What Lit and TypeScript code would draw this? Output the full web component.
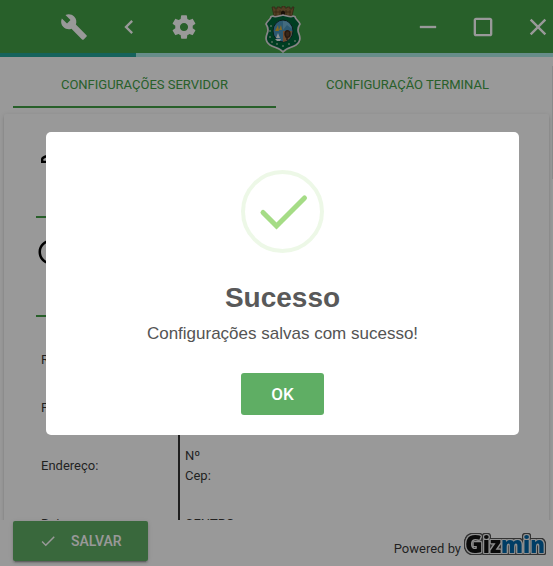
import { LitElement, html, css, svg } from "lit";
import { customElement } from "lit/decorators.js";

const paths = {
  build: "M22.7 19l-9.1-9.1c.9-2.3.4-5-1.5-6.9-2-2-5-2.4-7.4-1.3L9 6 6 9 1.6 4.7C.4 7.1.9 10.1 2.9 12.1c1.9 1.9 4.6 2.4 6.9 1.5l9.1 9.1c.4.4 1 .4 1.4 0l2.3-2.3c.5-.4.5-1.1.1-1.4z",
  back: "M15.41 7.41L14 6l-6 6 6 6 1.41-1.41L10.83 12z",
  gear: "M19.43 12.98c.04-.32.07-.64.07-.98s-.03-.66-.07-.98l2.11-1.65c.19-.15.24-.42.12-.64l-2-3.46c-.12-.22-.39-.3-.61-.22l-2.49 1c-.52-.4-1.08-.73-1.69-.98l-.38-2.65C14.46 2.18 14.25 2 14 2h-4c-.25 0-.46.18-.49.42l-.38 2.65c-.61.25-1.17.59-1.69.98l-2.49-1c-.23-.09-.49 0-.61.22l-2 3.46c-.13.22-.07.49.12.64l2.11 1.65c-.04.32-.07.65-.07.98s.03.66.07.98l-2.11 1.65c-.19.15-.24.42-.12.64l2 3.46c.12.22.39.3.61.22l2.49-1c.52.4 1.08.73 1.69.98l.38 2.65c.03.24.24.42.49.42h4c.25 0 .46-.18.49-.42l.38-2.65c.61-.25 1.17-.59 1.69-.98l2.49 1c.23.09.49 0 .61-.22l2-3.46c.12-.22.07-.49-.12-.64l-2.11-1.65zM12 15.5c-1.93 0-3.5-1.57-3.5-3.5s1.57-3.5 3.5-3.5 3.5 1.57 3.5 3.5-1.57 3.5-3.5 3.5z",
  minimize: "M19 13H5v-2h14v2z",
  square: "M18 4H6c-1.1 0-2 .9-2 2v12c0 1.1.9 2 2 2h12c1.1 0 2-.9 2-2V6c0-1.1-.9-2-2-2zm0 14H6V6h12v12z",
  close: "M19 6.41L17.59 5 12 10.59 6.41 5 5 6.41 10.59 12 5 17.59 6.41 19 12 13.41 17.59 19 19 17.59 13.41 12z",
  check: "M9 16.2L4.8 12l-1.4 1.4L9 19 21 7l-1.4-1.4L9 16.2z",
  person: "M12 5.9c1.16 0 2.1.94 2.1 2.1s-.94 2.1-2.1 2.1S9.9 9.16 9.9 8s.94-2.1 2.1-2.1m0 9c2.97 0 6.1 1.46 6.1 2.1v1.1H5.9V17c0-.64 3.13-2.1 6.1-2.1M12 4C9.79 4 8 5.79 8 8s1.79 4 4 4 4-1.79 4-4-1.79-4-4-4zm0 9c-2.67 0-8 1.34-8 4v3h16v-3c0-2.66-5.33-4-8-4z",
  clock: "M11.99 2C6.47 2 2 6.48 2 12s4.47 10 9.99 10C17.52 22 22 17.52 22 12S17.52 2 11.99 2zM12 20c-4.42 0-8-3.58-8-8s3.58-8 8-8 8 3.58 8 8-3.58 8-8 8zm.5-13H11v6l5.25 3.15.75-1.23-4.5-2.67z",
};

const icon = (name: keyof typeof paths) =>
  html`<svg class="icon" viewBox="0 0 24 24" aria-hidden="true"><path d=${paths[name]} /></svg>`;

const crest = svg`
  <path d="M8 1h3v2h2V1h3v1h2V0h3v2h2V1h3v2h2V1h2l-2 9H10z" fill="#8a6a3c" stroke="#4d391f" stroke-width=".7"/>
  <path d="M10 6h17M12 4v5M16 4v5M22 4v5M26 4v5" stroke="#57401f" stroke-width=".8" fill="none"/>
  <path d="M17 9V6q2-3 4 0v3z" fill="#2b1c10"/>
  <path d="M19 9C14 10 11 12 9 10Q7 10 7 11C6 14 3 15 2 18C4 21 5 24 3 28C1 33 3 37 6 39C11 42 16 42 19 46C22 42 27 42 32 39C35 37 37 33 35 28C33 24 34 21 36 18C35 15 32 14 31 11Q31 10 29 10C27 12 24 10 19 9Z" fill="#00683a" stroke="#e3dde1" stroke-width="1.7"/>
  <ellipse cx="19" cy="25" rx="10" ry="11" fill="#4a94bd" stroke="#17352e" stroke-width="1"/>
  <path d="M19 25h9q0 9-9 11z" fill="#b77f51"/>
  <path d="M19 15q7 0 9 8l-5-4-4 5z" fill="#71b3d4"/>
  <path d="M11 25l3-6 1 6zM15 24l2-5 1 5z" fill="#dfae36"/>
  <path d="M12 32l2-5 2 5zM11 33h6l-1 2h-3z" fill="#eef3f4"/>
  <path d="M22 25q4-1 4 3t-4 3q-2-3 0-6M23 31v3" stroke="#3f2b1d" stroke-width="1.5" fill="#60422b"/>
  <g fill="#e7ecd7"><circle cx="7" cy="20" r=".8"/><circle cx="6" cy="25" r=".8"/><circle cx="6" cy="31" r=".8"/><circle cx="8" cy="36" r=".8"/><circle cx="13" cy="38" r=".8"/><circle cx="19" cy="40" r=".8"/><circle cx="25" cy="38" r=".8"/><circle cx="31" cy="35" r=".8"/></g>`;

@customElement("app-root")
export class AppRoot extends LitElement {
  static styles = css`
    :host { display: block; overflow: hidden; }
    * { box-sizing: border-box; }
    .page {
      position: relative;
      display: flex;
      flex-direction: column;
      width: calc(100% + 12px);
      height: 100vh;
      background: #fff;
      color: rgba(0, 0, 0, 0.8);
      font: 13px/20px Roboto, sans-serif;
    }
    button { border: 0; padding: 0; background: none; font: inherit; color: inherit; cursor: pointer; }
    .icon { display: block; width: 28px; height: 28px; fill: currentColor; }
    header {
      display: grid;
      grid-template-columns: 1fr auto 1fr;
      align-items: center;
      height: 53px;
      flex: none;
      background: #43a047;
      color: #fff;
    }
    .tools { display: flex; padding-left: 46px; }
    .window { display: flex; justify-content: flex-end; }
    .tool { display: grid; place-items: center; width: 55px; height: 53px; }
    .crest { display: block; width: 38px; height: 47px; align-self: end; }
    .progress { flex: none; height: 4px; background: #acece6; }
    .bar { width: 24%; height: 100%; background: #26a69a; }
    .tabs { flex: none; display: flex; padding: 0 26px 0 13px; }
    .tab { flex: 1; height: 51px; padding-top: 6px; color: #43a047; border-bottom: 2px solid transparent; }
    .tab.active { border-color: #43a047; }
    .scroll { flex: 1; min-height: 0; overflow: hidden; padding: 6px 16px 0 4px; }
    .thumb {
      position: absolute;
      top: 66px;
      right: 0;
      width: 13px;
      height: 113px;
      background: #e4e4e4;
    }
    .card {
      padding: 24px 32px;
      border-radius: 2px;
      box-shadow: 0 2px 2px 0 rgba(0, 0, 0, 0.14), 0 1px 5px 0 rgba(0, 0, 0, 0.12), 0 3px 1px -2px rgba(0, 0, 0, 0.2);
    }
    .field { display: flex; height: 80px; margin-bottom: 19px; border-bottom: 2px solid #43a047; color: #000; }
    .field .icon { width: 30px; height: 30px; }
    .field input { flex: 1; height: 30px; border: 0; outline: 0; margin-left: 12px; font: inherit; }
    table { width: 100%; border-collapse: collapse; }
    th, td { padding: 14px 5px; text-align: left; font-weight: 400; vertical-align: middle; }
    th { width: 143px; }
    td { border-left: 2px solid #333; }
    footer { flex: none; display: flex; align-items: flex-start; justify-content: space-between; height: 46px; padding: 0 20px 0 13px; }
    .save {
      display: flex;
      align-items: center;
      gap: 14px;
      height: 40px;
      margin-top: 1px;
      padding: 0 26px;
      border-radius: 2px;
      background: #5fae64;
      color: #fff;
      font-size: 14px;
      font-weight: 500;
      box-shadow: 0 2px 2px 0 rgba(0, 0, 0, 0.14), 0 1px 5px 0 rgba(0, 0, 0, 0.12), 0 3px 1px -2px rgba(0, 0, 0, 0.2);
    }
    .save .icon { width: 18px; height: 18px; }
    .powered { display: flex; align-items: flex-start; gap: 4px; margin-top: 14px; line-height: 30px; }
    .brand {
      font: 800 22px/20px "Open Sans", sans-serif;
      color: #111;
      filter: drop-shadow(1px 0 0 #eee) drop-shadow(-1px 0 0 #eee) drop-shadow(0 1px 0 #eee) drop-shadow(0 -1px 0 #eee)
        drop-shadow(1px 0 0 #555) drop-shadow(-1px 0 0 #555) drop-shadow(0 1px 0 #555) drop-shadow(0 -1px 0 #555);
    }
    .initial { font-size: 24px; }
    .blue { color: #0067a8; }
    .overlay {
      position: absolute;
      inset: 0;
      display: grid;
      place-items: center;
      padding: 0 46px;
      background: rgba(0, 0, 0, 0.4);
    }
    .modal {
      display: flex;
      flex-direction: column;
      align-items: center;
      width: 100%;
      max-width: 500px;
      padding: 38px 20px 20px;
      border-radius: 5px;
      background: #fff;
      color: #545454;
      font-family: "Liberation Sans", sans-serif;
      text-align: center;
    }
    .success { width: 83px; height: 83px; fill: none; }
    h2 { margin: 27px 0 6px; color: #595959; font-size: 28px; line-height: 36px; }
    p { margin: 0 0 27px; font-size: 17px; line-height: 24px; }
    .ok { min-width: 83px; height: 42px; border-radius: 3px; background: #5fae64; color: #fff; font: 500 17px/20px Roboto, sans-serif; }
  `;

  render() {
    return html`
      <div class="page">
        <header>
          <nav class="tools">
            <button class="tool" aria-label="Ferramentas">${icon("build")}</button>
            <button class="tool" aria-label="Voltar">${icon("back")}</button>
            <button class="tool" aria-label="Ajustes">${icon("gear")}</button>
          </nav>
          <svg class="crest" viewBox="0 0 38 47" role="img" aria-label="Brasão">${crest}</svg>
          <div class="window">
            <button class="tool" aria-label="Minimizar">${icon("minimize")}</button>
            <button class="tool" aria-label="Maximizar">${icon("square")}</button>
            <button class="tool" aria-label="Fechar">${icon("close")}</button>
          </div>
        </header>
        <div class="progress"><div class="bar"></div></div>
        <div class="tabs" role="tablist">
          <button class="tab active" role="tab" aria-selected="true">CONFIGURAÇÕES SERVIDOR</button>
          <button class="tab" role="tab" aria-selected="false">CONFIGURAÇÃO TERMINAL</button>
        </div>
        <main class="scroll">
          <div class="card">
            <label class="field">${icon("person")}<input type="text" aria-label="Usuário" /></label>
            <label class="field">${icon("clock")}<input type="text" aria-label="Horário" /></label>
            <table>
              <tr><th scope="row">Razão:</th><td></td></tr>
              <tr><th scope="row">Fantasia:</th><td></td></tr>
              <tr><th scope="row">Endereço:</th><td>Nº<br />Cep:</td></tr>
              <tr><th scope="row">Bairro:</th><td>CENTRO</td></tr>
            </table>
          </div>
        </main>
        <footer>
          <button class="save">${icon("check")}<span>SALVAR</span></button>
          <div class="powered"><span>Powered by</span><span class="brand"><span class="initial">G</span>iz<span class="blue">min</span></span></div>
        </footer>
        <div class="thumb"></div>
        <div class="overlay">
          <section class="modal" role="dialog" aria-modal="true" aria-labelledby="title">
            <svg class="success" viewBox="0 0 83 83" aria-hidden="true">
              <circle cx="41.5" cy="41.5" r="39.5" stroke="#a5dc86" stroke-opacity=".2" stroke-width="4" />
              <path d="M22 42.5L35.5 56L63.5 28" stroke="#a5dc86" stroke-width="5" stroke-linecap="round" />
            </svg>
            <h2 id="title">Sucesso</h2>
            <p>Configurações salvas com sucesso!</p>
            <button class="ok">OK</button>
          </section>
        </div>
      </div>
    `;
  }
}
